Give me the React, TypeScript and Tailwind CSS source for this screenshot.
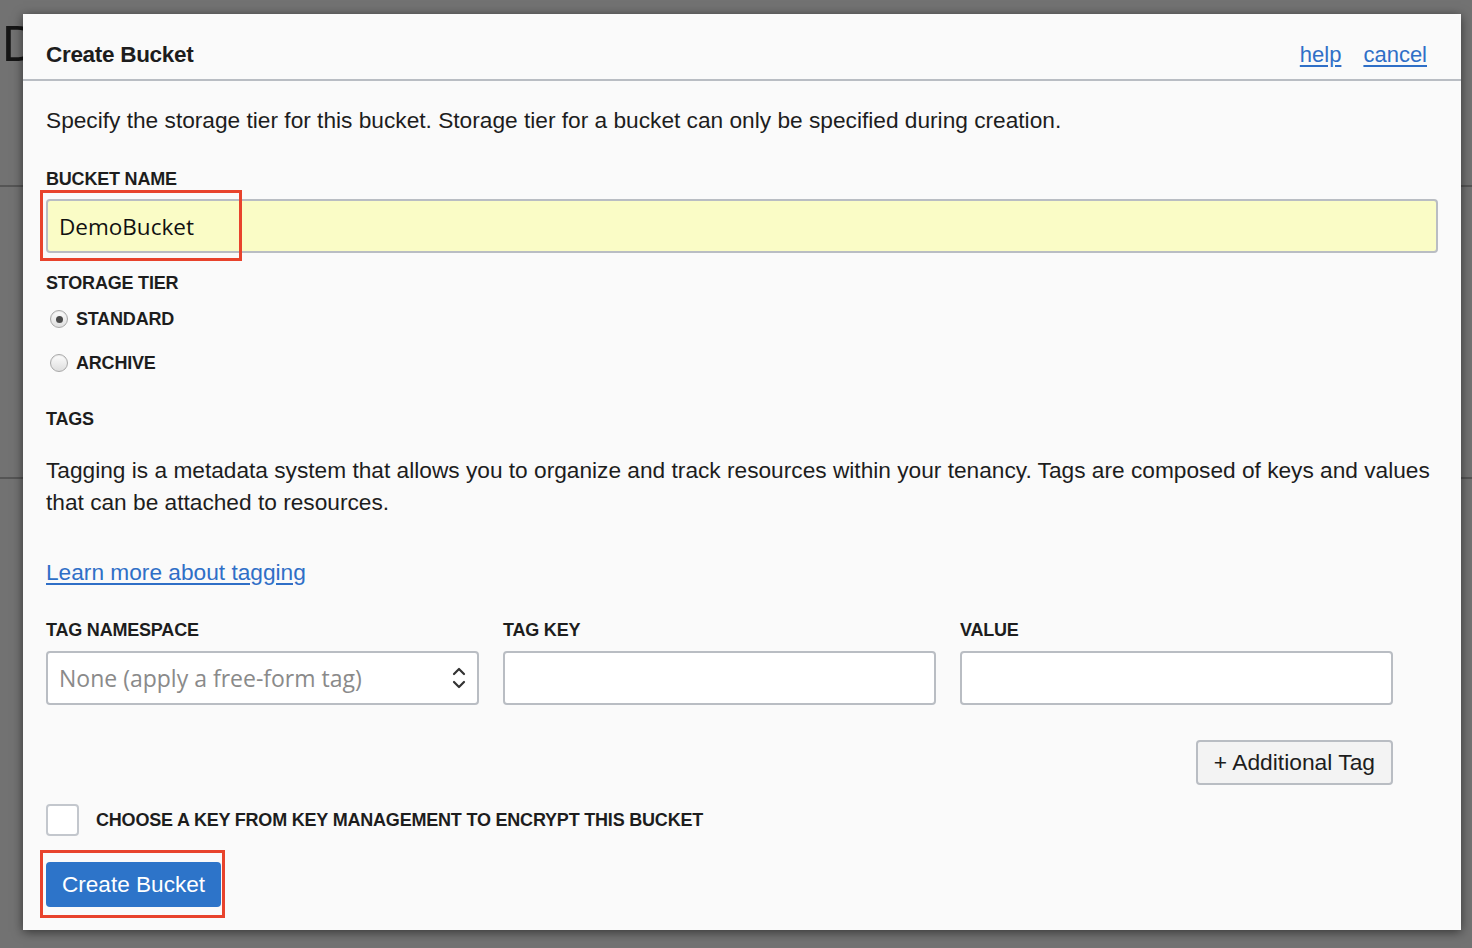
import type { ReactNode } from "react";

const sans = "font-['Liberation_Sans',Arial,sans-serif]";
const field = "font-['Open_Sans','DejaVu_Sans',sans-serif]";

function Label({ children, className = "" }: { children: ReactNode; className?: string }) {
  return (
    <div className={`text-[18px] leading-[20px] font-bold tracking-[-0.2px] text-[#1d1d1d] uppercase ${className}`}>
      {children}
    </div>
  );
}

function Radio({ checked, label, className = "" }: { checked?: boolean; label: string; className?: string }) {
  return (
    <label className={`flex h-[20px] items-center ${className}`}>
      <span className="ml-[4px] flex h-[18px] w-[18px] items-center justify-center rounded-full border border-[#a8a8a8] bg-gradient-to-b from-[#fdfdfd] to-[#dedede] shadow-[inset_0_1px_1px_rgba(0,0,0,0.08)]">
        {checked ? <span className="h-[7px] w-[7px] rounded-full bg-[#4a4a4a]" /> : null}
      </span>
      <span className="ml-[8px] text-[18px] font-bold tracking-[-0.2px] text-[#1d1d1d]">{label}</span>
    </label>
  );
}

function Highlight({ className }: { className: string }) {
  return <span className={`pointer-events-none absolute border-[3px] border-[#e8432c] ${className}`} />;
}

export default function App() {
  return (
    <div className={`relative h-[948px] w-[1472px] overflow-hidden bg-[#727272] ${sans}`}>
      {/* page behind the modal */}
      <div className="absolute left-[2px] top-[14px] text-[50px] leading-[60px] text-[#151515]">D</div>
      <div className="absolute left-0 right-0 top-[185px] h-[2px] bg-[#555]" />
      <div className="absolute left-0 right-0 top-[477px] h-[2px] bg-[#555]" />

      <div className="absolute left-[23px] top-[14px] w-[1438px] bg-[#fafafa] shadow-[0_2px_10px_rgba(0,0,0,0.55)]">
        <header className="flex items-center justify-between border-b-2 border-[#b9bdc3] pl-[23px] pr-[34px] pt-[29px] pb-[12px]">
          <h1 className="text-[22.5px] leading-[24px] font-bold tracking-[-0.3px] text-[#1d1d1d]">Create Bucket</h1>
          <div className="flex gap-[22px] text-[22px] leading-[24px] text-[#2f6fc7]">
            <a className="underline underline-offset-[3px]" href="#">help</a>
            <a className="underline underline-offset-[3px]" href="#">cancel</a>
          </div>
        </header>

        <div className="px-[23px] pb-[23px] text-[#1d1d1d]">
          <p className="mt-[25px] text-[22.7px] leading-[28px]">
            Specify the storage tier for this bucket. Storage tier for a bucket can only be specified during creation.
          </p>

          <Label className="mt-[35px]">Bucket Name</Label>
          <div className="relative mt-[10px]">
            <input
              readOnly
              value="DemoBucket"
              className={`h-[54px] w-full rounded-[4px] border-2 border-[#b9bdc3] bg-[#fafcc6] px-[11px] text-[22.5px] text-[#111] outline-none ${field}`}
            />
            <Highlight className="-left-[6px] -top-[9px] h-[71px] w-[202px]" />
          </div>

          <Label className="mt-[20px]">Storage Tier</Label>
          <Radio checked label="STANDARD" className="mt-[16px]" />
          <Radio label="ARCHIVE" className="mt-[24px]" />

          <Label className="mt-[36px]">Tags</Label>
          <p className="mt-[25px] text-[22.7px] leading-[32px]">
            Tagging is a metadata system that allows you to organize and track resources within your tenancy. Tags are
            composed of keys and values that can be attached to resources.
          </p>
          <a href="#" className="mt-[40px] block w-fit text-[22.7px] leading-[28px] text-[#2f6fc7] underline underline-offset-[3px]">
            Learn more about tagging
          </a>

          <div className="mt-[34px] grid grid-cols-[433px_433px_433px] gap-x-[24px]">
            <Label>Tag Namespace</Label>
            <Label>Tag Key</Label>
            <Label>Value</Label>

            <div className="relative mt-[11px] flex h-[54px] items-center rounded-[4px] border-2 border-[#b9bdc3] bg-white pl-[11px] pr-[10px]">
              <span className={`flex-1 text-[23px] text-[#8a8a8a] ${field}`}>None (apply a free-form tag)</span>
              <svg width="16" height="26" viewBox="0 0 16 26" fill="none" stroke="#333" strokeWidth="2.2" strokeLinecap="round" strokeLinejoin="round">
                <path d="M3 9 L8 4 L13 9" />
                <path d="M3 17 L8 22 L13 17" />
              </svg>
            </div>
            <div className="mt-[11px] h-[54px] rounded-[4px] border-2 border-[#b9bdc3] bg-white" />
            <div className="mt-[11px] h-[54px] rounded-[4px] border-2 border-[#b9bdc3] bg-white" />

            <div className="col-start-3 mt-[35px] flex justify-end">
              <button className="h-[45px] rounded-[4px] border-2 border-[#b9bdc3] bg-[#f3f3f3] px-[16px] text-[22.8px] text-[#1d1d1d]">
                + Additional Tag
              </button>
            </div>
          </div>

          <label className="mt-[19px] flex items-center">
            <span className="h-[32px] w-[33px] rounded-[4px] border-2 border-[#c3c7cd] bg-white" />
            <span className="ml-[17px] text-[18px] font-bold tracking-[-0.2px] text-[#1d1d1d]">
              CHOOSE A KEY FROM KEY MANAGEMENT TO ENCRYPT THIS BUCKET
            </span>
          </label>

          <div className="relative mt-[26px] w-fit">
            <button className="h-[45px] w-[175px] rounded-[4px] bg-[#2d74c9] text-[22.6px] text-white">
              Create Bucket
            </button>
            <Highlight className="-left-[6px] -top-[12px] h-[68px] w-[185px]" />
          </div>
        </div>
      </div>
    </div>
  );
}
